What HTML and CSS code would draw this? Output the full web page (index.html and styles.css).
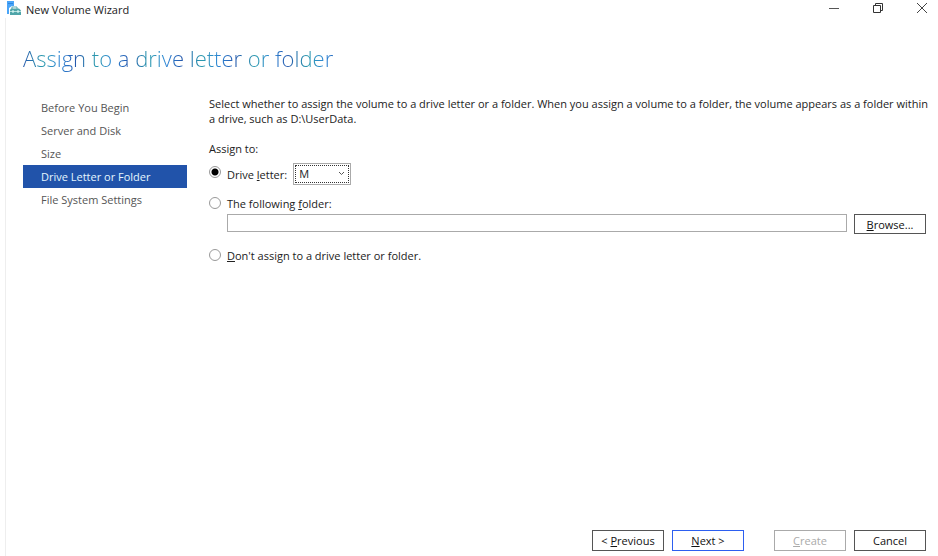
FILE: index.html
```html
<!DOCTYPE html>
<html lang="en">
<head>
<meta charset="utf-8">
<title>New Volume Wizard</title>
<link rel="stylesheet" href="styles.css">
</head>
<body>
<div class="window">
  <header class="titlebar">
    <svg class="app-icon" width="14" height="16" viewBox="0 0 14 16" aria-hidden="true">
      <path d="M0 1h7v13H0z" fill="#4aa5f8"/>
      <path d="M1 3.500h5" stroke="#2c86e0"/>
      <path d="M2 8l3-2h5l4 3v6H2z" fill="#fff"/>
      <path d="M5 9V7h5v2" fill="none" stroke="#5fa9ad"/>
      <path d="M4 8.500h8l2 2V15H3v-5z" fill="#4fa5a9"/>
      <path d="M3 11.500h11" stroke="#b5e0dc"/>
      <path d="M6 10v3M11 10v3" stroke="#e8ffff"/>
    </svg>
    <span class="caption">New Volume Wizard</span>
    <div class="window-controls">
      <button type="button" aria-label="Minimize"><svg width="12" height="12" viewBox="0 0 12 12"><path d="M1 6.500h10" stroke="#555"/></svg></button>
      <button type="button" aria-label="Restore"><svg width="12" height="12" viewBox="0 0 12 12"><path d="M1.500 3.500h7v7h-7z M3.500 3.500v-2h7v7h-2" fill="none" stroke="#333"/></svg></button>
      <button type="button" aria-label="Close"><svg width="12" height="12" viewBox="0 0 12 12"><path d="M1 1l10 10M11 1L1 11" stroke="#444"/></svg></button>
    </div>
  </header>
  <div class="wizard">
    <h1>Assign to a drive letter or folder</h1>
    <div class="columns">
      <nav class="steps">
        <a href="#before">Before You Begin</a>
        <a href="#server">Server and Disk</a>
        <a href="#size">Size</a>
        <a href="#letter" class="current" aria-current="step">Drive Letter or Folder</a>
        <a href="#settings">File System Settings</a>
      </nav>
      <main class="page">
        <p class="intro">Select whether to assign the volume to a drive letter or a folder. When you assign a volume to a folder, the volume appears as a folder within a drive, such as D:\UserData.</p>
        <p class="group-label">Assign to:</p>
        <div class="option letter-option">
          <input type="radio" name="target" id="by-letter" checked>
          <label for="by-letter">Drive <u>l</u>etter:</label>
          <span class="select-box">
            <select aria-label="Drive letter"><option>M</option></select>
            <svg width="7" height="5" viewBox="0 0 7 5" aria-hidden="true"><path d="M1 1l2.500 2.500L6 1" fill="none" stroke="#555"/></svg>
          </span>
        </div>
        <div class="option">
          <input type="radio" name="target" id="by-folder">
          <label for="by-folder">The following <u>f</u>older:</label>
        </div>
        <div class="folder-row">
          <input type="text" aria-label="Folder path">
          <button type="button" class="button"><span><u>B</u>rowse...</span></button>
        </div>
        <div class="option">
          <input type="radio" name="target" id="no-assign">
          <label for="no-assign"><u>D</u>on't assign to a drive letter or folder.</label>
        </div>
      </main>
    </div>
    <footer class="actions">
      <button type="button" class="button"><span>&lt; <u>P</u>revious</span></button>
      <button type="button" class="button default"><span><u>N</u>ext &gt;</span></button>
      <button type="button" class="button create" disabled><span><u>C</u>reate</span></button>
      <button type="button" class="button">Cancel</button>
    </footer>
  </div>
</div>
</body>
</html>
```
FILE: styles.css
```css
* { box-sizing: border-box; }
body {
  margin: 0;
  background: #fff;
  color: #222;
  font: 11px/15px "Open Sans", "Noto Sans", sans-serif;
}
button, input, select { font: inherit; color: inherit; margin: 0; }
p, h1 { margin: 0; font-weight: 400; }
u { text-underline-offset: 1px; }
.window { min-height: 100vh; display: flex; flex-direction: column; padding-left: 5px; }
.titlebar { display: flex; align-items: center; height: 18px; }
.app-icon { margin: 0 5px 2px 2px; }
.window-controls { margin-left: auto; display: flex; gap: 32px; padding-right: 10px; margin-bottom: 2px; }
.window-controls button { border: 0; padding: 0; background: none; display: flex; }
.wizard {
  flex: 1;
  display: flex;
  flex-direction: column;
  border-left: 1px solid #eee;
  padding: 25px 12px 5px 17px;
}
h1 {
  font-size: 22px;
  line-height: 30px;
  font-weight: 300;
  align-self: flex-start;
  color: transparent;
  background: repeating-linear-gradient(90deg, #2458ac 0, #2b9aae 20px, #2f86d6 37px, #2458ac 53px);
  background-clip: text;
  -webkit-background-clip: text;
}
.columns { display: flex; gap: 22px; margin-top: 23px; flex: 1; }
.steps { width: 164px; flex: none; }
.steps a {
  display: block;
  padding-left: 18px;
  line-height: 23px;
  color: #555;
  text-decoration: none;
}
.steps .current { background: #2153aa; color: #e4f6ff; }
.page { flex: 1; min-width: 0; }
.intro { margin-right: -6px; }
.group-label { margin-top: 15px; }
.option { display: flex; align-items: center; gap: 6px; height: 16px; }
.option input {
  appearance: none;
  width: 12px;
  height: 12px;
  border: 1px solid #999;
  border-radius: 50%;
  background: #fff;
}
.option input:checked { background: radial-gradient(circle, #000 0 3px, #fff 4px); }
.letter-option { height: 22px; margin: 7px 0 10px; }
.letter-option input { align-self: flex-start; margin-top: 3px; }
.select-box { position: relative; display: flex; width: 58px; height: 22px; border: 1px solid #aaa; padding: 1px; }
.select-box select { appearance: none; flex: 1; min-width: 0; border: 1px dotted #333; border-radius: 0; outline: 0; background: #fff; padding: 0 3px; line-height: 16px; }
.select-box svg { position: absolute; right: 5px; top: 7px; pointer-events: none; }
.folder-row { display: flex; gap: 7px; margin: 3px 0 13px 18px; align-items: flex-start; }
.folder-row input { flex: 1; min-width: 0; height: 18px; border: 1px solid #aaa; padding: 0 3px; }
.button { width: 72px; height: 20px; padding: 0; border: 1px solid #555; border-radius: 0; background: #fff; color: #111; }
.button.default { border-color: #2d5ff0; }
.button:disabled { border-color: #aaa; color: #aaa; }
.actions { display: flex; justify-content: flex-end; gap: 8px; }
.actions .create { margin-left: 22px; }
.actions .button { height: 21px; }
```
